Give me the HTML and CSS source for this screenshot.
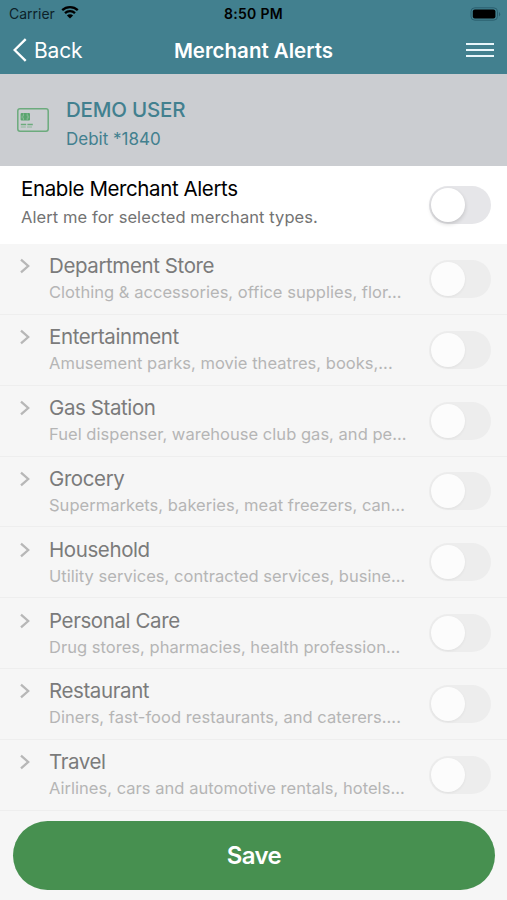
FILE: index.html
```html
<!DOCTYPE html>
<html lang="en">
<head>
    <meta charset="UTF-8">
    <meta name="viewport" content="width=device-width, initial-scale=1.0">
    <title>Merchant Alerts</title>
    <link rel="stylesheet" href="styles.css">
</head>
<body>
    <header class="header">
        <div class="status-bar">
            <div class="carrier">
                <span>Carrier</span>
                <svg class="wifi" width="18" height="14" viewBox="0 0 18 14">
                    <path d="M1.2 5.2a11.3 11.3 0 0 1 15.6 0M4 8.2a7.2 7.2 0 0 1 10 0" fill="none" stroke="#000" stroke-width="2.3"/>
                    <path d="M9 13.6L5.9 10.5a4.4 4.4 0 0 1 6.2 0z"/>
                </svg>
            </div>
            <div class="time">8:50 PM</div>
            <svg class="battery" width="32" height="14" viewBox="0 0 32 14">
                <rect x="1" y="0.8" width="26.5" height="12.4" rx="3.8" fill="none" stroke="#2b5f6f" stroke-width="1"/>
                <rect x="2.8" y="2.5" width="22.6" height="9" rx="2"/>
                <path d="M29 5v4.4a2.6 2.6 0 0 0 0-4.4z" fill="#2b5f6f"/>
            </svg>
        </div>
        <nav class="navbar">
            <a href="#" class="back">
                <svg width="14" height="24" viewBox="0 0 14 24">
                    <path d="M12.7 1.2L1.6 12l11.1 10.8" fill="none" stroke="#fff" stroke-width="2.4"/>
                </svg>
                <span>Back</span>
            </a>
            <h1>Merchant Alerts</h1>
            <button class="menu" aria-label="Menu">
                <span></span>
                <span></span>
                <span></span>
            </button>
        </nav>
    </header>

    <section class="account">
        <svg class="card-icon" width="32" height="24" viewBox="0 0 32 24">
            <rect x="0.8" y="0.8" width="30.4" height="22.4" rx="2.2" fill="none" stroke="#6cab7d" stroke-width="1.5"/>
            <rect x="3.6" y="5" width="9.4" height="7.4" rx="1" fill="#5aa56e"/>
            <path d="M6.4 5.4v2.8h-2M6.4 12v-2.2h-2M10.2 5.4v2.8h2M10.2 12v-2.2h2" fill="none" stroke="#9fc3aa" stroke-width="0.7"/>
            <path d="M3.8 16.4h5.4M10.4 16.4h5.4" stroke="#6cab7d" stroke-width="1.5"/>
            <path d="M3.8 19h5M10 19h5" stroke="#8fb99b" stroke-width="1"/>
        </svg>
        <div class="account-text">
            <h2>DEMO USER</h2>
            <p>Debit *1840</p>
        </div>
    </section>

    <section class="enable">
        <div class="text">
            <h3>Enable Merchant Alerts</h3>
            <p>Alert me for selected merchant types.</p>
        </div>
        <span class="toggle"></span>
    </section>

    <ul class="merchant-list">
        <li>
            <svg class="chevron" width="12" height="16" viewBox="0 0 12 16"><path d="M2 1.6L9.2 8 2 14.4"/></svg>
            <div class="text">
                <h3>Department Store</h3>
                <p>Clothing &amp; accessories, office supplies, flor...</p>
            </div>
            <span class="toggle"></span>
        </li>
        <li>
            <svg class="chevron" width="12" height="16" viewBox="0 0 12 16"><path d="M2 1.6L9.2 8 2 14.4"/></svg>
            <div class="text">
                <h3>Entertainment</h3>
                <p>Amusement parks, movie theatres, books,...</p>
            </div>
            <span class="toggle"></span>
        </li>
        <li>
            <svg class="chevron" width="12" height="16" viewBox="0 0 12 16"><path d="M2 1.6L9.2 8 2 14.4"/></svg>
            <div class="text">
                <h3>Gas Station</h3>
                <p>Fuel dispenser, warehouse club gas, and pe...</p>
            </div>
            <span class="toggle"></span>
        </li>
        <li>
            <svg class="chevron" width="12" height="16" viewBox="0 0 12 16"><path d="M2 1.6L9.2 8 2 14.4"/></svg>
            <div class="text">
                <h3>Grocery</h3>
                <p>Supermarkets, bakeries, meat freezers, can...</p>
            </div>
            <span class="toggle"></span>
        </li>
        <li>
            <svg class="chevron" width="12" height="16" viewBox="0 0 12 16"><path d="M2 1.6L9.2 8 2 14.4"/></svg>
            <div class="text">
                <h3>Household</h3>
                <p>Utility services, contracted services, busine...</p>
            </div>
            <span class="toggle"></span>
        </li>
        <li>
            <svg class="chevron" width="12" height="16" viewBox="0 0 12 16"><path d="M2 1.6L9.2 8 2 14.4"/></svg>
            <div class="text">
                <h3>Personal Care</h3>
                <p>Drug stores, pharmacies, health profession...</p>
            </div>
            <span class="toggle"></span>
        </li>
        <li>
            <svg class="chevron" width="12" height="16" viewBox="0 0 12 16"><path d="M2 1.6L9.2 8 2 14.4"/></svg>
            <div class="text">
                <h3>Restaurant</h3>
                <p>Diners, fast-food restaurants, and caterers....</p>
            </div>
            <span class="toggle"></span>
        </li>
        <li>
            <svg class="chevron" width="12" height="16" viewBox="0 0 12 16"><path d="M2 1.6L9.2 8 2 14.4"/></svg>
            <div class="text">
                <h3>Travel</h3>
                <p>Airlines, cars and automotive rentals, hotels...</p>
            </div>
            <span class="toggle"></span>
        </li>
    </ul>

    <footer class="footer">
        <button class="btn-save">Save</button>
    </footer>
</body>
</html>
```
FILE: styles.css
```css
* {
    margin: 0;
    padding: 0;
    box-sizing: border-box;
}

body {
    height: 900px;
    overflow: hidden;
    font-family: Inter, 'Liberation Sans', sans-serif;
    background-color: #f6f6f6;
    color: #000;
}

h1,
h2,
h3,
p {
    white-space: nowrap;
}

.header {
    height: 74px;
    background-color: #42808f;
}

.status-bar {
    display: grid;
    grid-template-columns: 1fr auto 1fr;
    align-items: center;
    height: 27px;
    padding: 0 5px 0 9px;
}

.carrier {
    display: flex;
    align-items: center;
    gap: 6px;
    font-size: 14px;
    color: #0d2229;
}

.wifi {
    margin-top: -3px;
}

.time {
    font-size: 14px;
    font-weight: 600;
    letter-spacing: 0.3px;
    padding-right: 4px;
}

.battery {
    justify-self: end;
}

.navbar {
    display: grid;
    grid-template-columns: 1fr auto 1fr;
    align-items: center;
    height: 46px;
    padding: 0 13px;
    color: #fff;
}

.back {
    display: flex;
    align-items: center;
    gap: 7px;
    color: #fff;
    font-size: 21px;
    letter-spacing: -0.2px;
    text-decoration: none;
}

.navbar h1 {
    font-size: 20.5px;
    font-weight: 600;
}

.menu {
    display: flex;
    flex-direction: column;
    justify-self: end;
    gap: 4px;
    width: 28px;
    border: none;
    background: none;
    cursor: pointer;
}

.menu span {
    height: 2px;
    background-color: #e9f6fb;
}

.account {
    display: flex;
    align-items: center;
    gap: 17px;
    height: 92px;
    padding: 0 17px;
    background-color: #cbcdd1;
    color: #42808f;
}

.account-text {
    padding-top: 10px;
}

.account h2 {
    font-size: 20.5px;
    font-weight: 500;
    letter-spacing: -0.2px;
    line-height: 28px;
}

.account p {
    font-size: 17px;
    line-height: 30px;
}

.enable {
    display: flex;
    align-items: center;
    height: 78px;
    padding: 0 16px 0 21px;
    background-color: #fff;
}

.text {
    flex: 1;
}

.text h3 {
    font-size: 20.5px;
    font-weight: 400;
    letter-spacing: -0.4px;
    line-height: 26px;
}

.text p {
    font-size: 16.5px;
    letter-spacing: 0.03px;
    line-height: 26px;
}

.enable .text {
    padding-bottom: 7px;
}

.enable .text h3 {
    line-height: 30px;
}

.enable .text p {
    color: #737373;
    letter-spacing: 0.08px;
}

.toggle {
    width: 62px;
    height: 38px;
    padding: 2px;
    border-radius: 19px;
    background-color: #e6e6e9;
}

.toggle::before {
    content: "";
    display: block;
    width: 34px;
    height: 34px;
    border-radius: 50%;
    background-color: #fff;
    box-shadow: 0 2px 4px rgba(0, 0, 0, 0.16);
}

.merchant-list {
    list-style: none;
}

.merchant-list li {
    display: flex;
    align-items: center;
    height: 70.85px;
    padding: 0 16px 0 19px;
    border-bottom: 1px solid #eeeeee;
}

.merchant-list .text {
    padding-top: 1px;
}

.chevron {
    margin: -25px 18px 0 0;
    fill: none;
    stroke: #b7b7b7;
    stroke-width: 2.3;
}

.merchant-list h3 {
    color: #7b7b7b;
}

.merchant-list p {
    color: #b5b5b5;
}

.merchant-list .toggle {
    background-color: #ededed;
}

.merchant-list .toggle::before {
    background-color: #fcfcfc;
    box-shadow: 0 1px 3px rgba(0, 0, 0, 0.06);
}

.footer {
    padding: 10px 12px 10px 13px;
}

.btn-save {
    display: block;
    width: 100%;
    height: 69px;
    border: none;
    border-radius: 35px;
    background-color: #479050;
    color: #fff;
    font-family: inherit;
    font-size: 24px;
    font-weight: 600;
    letter-spacing: -0.6px;
    cursor: pointer;
}
```
